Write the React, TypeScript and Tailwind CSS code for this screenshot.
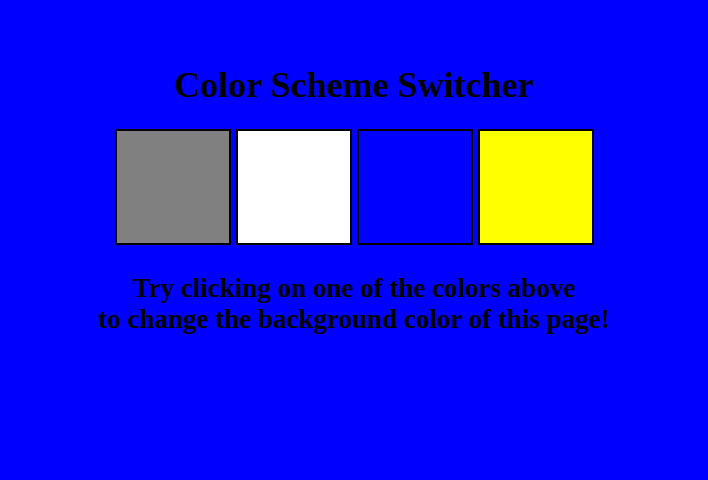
import { useState } from 'react'

const swatches = [
  { name: 'gray', bg: 'bg-[#808080]', value: '#808080' },
  { name: 'white', bg: 'bg-white', value: '#ffffff' },
  { name: 'blue', bg: 'bg-[#0000ff]', value: '#0000ff' },
  { name: 'yellow', bg: 'bg-[#ffff00]', value: '#ffff00' },
]

export default function App() {
  const [color, setColor] = useState('#0000ff')

  return (
    <div
      className="min-h-[480px] w-full font-['Liberation_Serif',serif] text-black"
      style={{ backgroundColor: color }}
    >
      <div className="flex flex-col items-center pt-[67px]">
        <h1 className="text-[36px] font-bold leading-[36px]">Color Scheme Switcher</h1>

        {/* Swatches */}
        <div className="mt-[26px] flex gap-[5px]">
          {swatches.map((s) => (
            <button
              key={s.name}
              onClick={() => setColor(s.value)}
              className={`h-[116px] w-[116px] border-2 border-black ${s.bg}`}
              aria-label={s.name}
            />
          ))}
        </div>

        <p className="mt-[28px] text-center text-[27px] font-bold leading-[31px]">
          Try clicking on one of the colors above
          <br />
          to change the background color of this page!
        </p>
      </div>
    </div>
  )
}
